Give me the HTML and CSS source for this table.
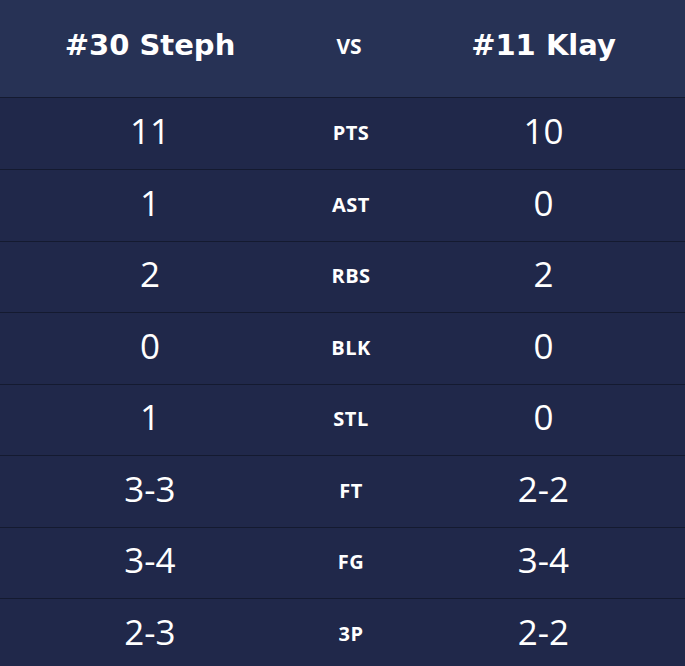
FILE: index.html
```html
<!DOCTYPE html>
<html>
<head>
<meta charset="utf-8">
<link rel="stylesheet" href="styles.css">
</head>
<body>
<div class="board">
  <div class="row head">
    <div class="cell side name">#30 Steph</div>
    <div class="cell mid vs">VS</div>
    <div class="cell side name">#11 Klay</div>
  </div>
  <div class="row"><div class="cell side val">11</div><div class="cell mid lbl">PTS</div><div class="cell side val">10</div></div>
  <div class="row"><div class="cell side val">1</div><div class="cell mid lbl">AST</div><div class="cell side val">0</div></div>
  <div class="row"><div class="cell side val">2</div><div class="cell mid lbl">RBS</div><div class="cell side val">2</div></div>
  <div class="row"><div class="cell side val">0</div><div class="cell mid lbl">BLK</div><div class="cell side val">0</div></div>
  <div class="row"><div class="cell side val">1</div><div class="cell mid lbl">STL</div><div class="cell side val">0</div></div>
  <div class="row"><div class="cell side val">3-3</div><div class="cell mid lbl">FT</div><div class="cell side val">2-2</div></div>
  <div class="row"><div class="cell side val">3-4</div><div class="cell mid lbl">FG</div><div class="cell side val">3-4</div></div>
  <div class="row"><div class="cell side val">2-3</div><div class="cell mid lbl">3P</div><div class="cell side val">2-2</div></div>
</div>
</body>
</html>
```
FILE: styles.css
```css
html, body {
  margin: 0;
  padding: 0;
  background: #20284a;
}
.board {
  width: 685px;
  font-family: "Open Sans", sans-serif;
  color: #ffffff;
}
.row {
  display: grid;
  grid-template-columns: 300px 102px 283px;
  align-items: center;
  height: 71.5px;
  border-top: 1px solid #141a30;
  box-sizing: border-box;
  background: #20284a;
}
.row.head {
  height: 97px;
  border-top: none;
  background: #273255;
}
.row.head + .row {
  height: 72px;
}
.cell {
  text-align: center;
}
.name {
  font-family: "DejaVu Sans", sans-serif;
  font-size: 29px;
  font-weight: 700;
  padding-bottom: 8px;
}
.vs {
  font-size: 21px;
  font-weight: 700;
  padding-bottom: 6px;
  padding-right: 4px;
}
.val {
  font-size: 35px;
  font-weight: 400;
  padding-bottom: 6px;
}
.lbl {
  font-size: 20px;
  font-weight: 700;
  letter-spacing: 0.5px;
  padding-bottom: 2px;
}
```
